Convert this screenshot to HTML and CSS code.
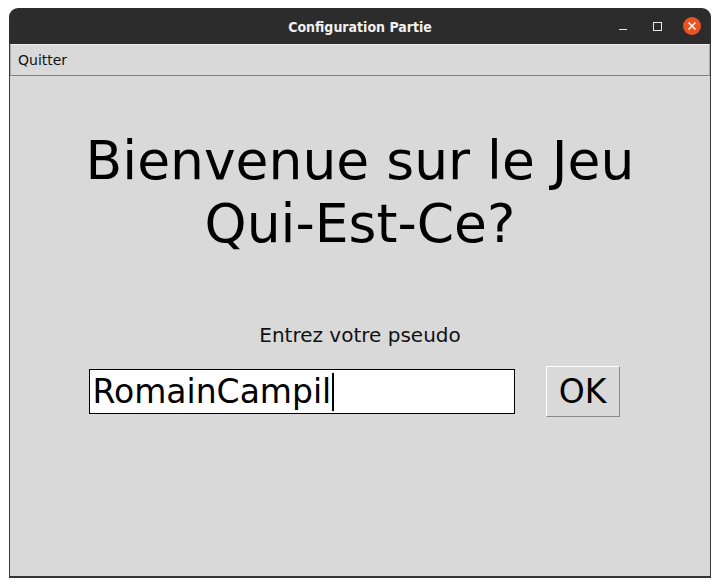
FILE: index.html
```html
<!DOCTYPE html>
<html>
<head>
<meta charset="utf-8">
<link rel="stylesheet" href="styles.css">
</head>
<body>
<div class="window">
  <div class="titlebar">
    <span class="title">Configuration Partie</span>
    <div class="controls">
      <span class="ctl min"></span>
      <span class="ctl max"></span>
      <span class="ctl close">
        <svg width="18" height="18" viewBox="0 0 18 18"><circle cx="9" cy="9" r="9" fill="#e95420"/><path d="M5.5 5.5 L12.5 12.5 M12.5 5.5 L5.5 12.5" stroke="#fff" stroke-width="1.5"/></svg>
      </span>
    </div>
  </div>
  <div class="client">
    <div class="menubar"><span class="menuitem">Quitter</span></div>
    <div class="content">
      <h1 class="heading">Bienvenue sur le Jeu<br>Qui-Est-Ce?</h1>
      <p class="label">Entrez votre pseudo</p>
      <div class="row">
        <div class="entry"><span class="entry-text">RomainCampil</span><span class="caret"></span></div>
        <div class="ok">OK</div>
      </div>
    </div>
  </div>
</div>
</body>
</html>
```
FILE: styles.css
```css
html, body {
  margin: 0;
  padding: 0;
  background: #ffffff;
}
body {
  width: 720px;
  height: 587px;
  overflow: hidden;
  font-family: "DejaVu Sans", sans-serif;
}
.window {
  margin: 8px 0 0 9px;
  width: 702px;
  height: 570px;
  display: flex;
  flex-direction: column;
}
.titlebar {
  height: 36px;
  background: #2c2c2c;
  border-radius: 9px 9px 0 0;
  position: relative;
  display: flex;
  align-items: center;
  justify-content: center;
}
.title {
  color: #f0f0f0;
  font-family: "DejaVu Sans Condensed", "DejaVu Sans", sans-serif;
  font-weight: bold;
  font-size: 14px;
  margin-top: 1px;
}
.controls {
  position: absolute;
  right: 10px;
  top: 0;
  height: 36px;
  display: flex;
  align-items: center;
}
.ctl {
  display: block;
}
.min {
  width: 8px;
  height: 1px;
  background: #e8e8e8;
  margin-top: 6px;
  margin-right: 26px;
}
.max {
  width: 7px;
  height: 7px;
  border: 1px solid #e8e8e8;
  margin-right: 21px;
}
.close {
  width: 18px;
  height: 18px;
}
.close svg {
  display: block;
}
.client {
  flex: 1;
  background: #d9d9d9;
  border-left: 1px solid #3a3a3a;
  border-right: 1px solid #3a3a3a;
  border-bottom: 2px solid #333333;
  display: flex;
  flex-direction: column;
}
.menubar {
  height: 30px;
  border-top: 1px solid #ececec;
  border-left: 1px solid #a8a8a8;
  border-right: 1px solid #a8a8a8;
  border-bottom: 1px solid #7f7f7f;
  display: flex;
  align-items: center;
}
.menuitem {
  font-size: 14px;
  color: #111;
  padding-left: 7px;
}
.content {
  flex: 1;
  display: flex;
  flex-direction: column;
  align-items: center;
}
.heading {
  margin: 53px 0 0 0;
  font-weight: normal;
  font-size: 53.5px;
  line-height: 63px;
  text-align: center;
  color: #000;
}
.label {
  margin: 69px 0 0 0;
  font-size: 20px;
  line-height: 23px;
  color: #111;
}
.row {
  margin: 19px 12px 0 0;
  display: flex;
  align-items: center;
}
.entry {
  width: 421px;
  height: 43px;
  background: #fff;
  border: 1px solid #000;
  display: flex;
  align-items: center;
  padding-left: 3px;
}
.entry-text {
  font-size: 33px;
  line-height: 38px;
  color: #000;
}
.caret {
  width: 2px;
  height: 38px;
  background: #000;
  margin-left: 1px;
}
.ok {
  margin-left: 31px;
  width: 72px;
  height: 49px;
  border-top: 1px solid #ffffff;
  border-left: 1px solid #ffffff;
  border-right: 1px solid #8a8a8a;
  border-bottom: 1px solid #8a8a8a;
  display: flex;
  align-items: center;
  justify-content: center;
  font-size: 33px;
  color: #000;
}
```
